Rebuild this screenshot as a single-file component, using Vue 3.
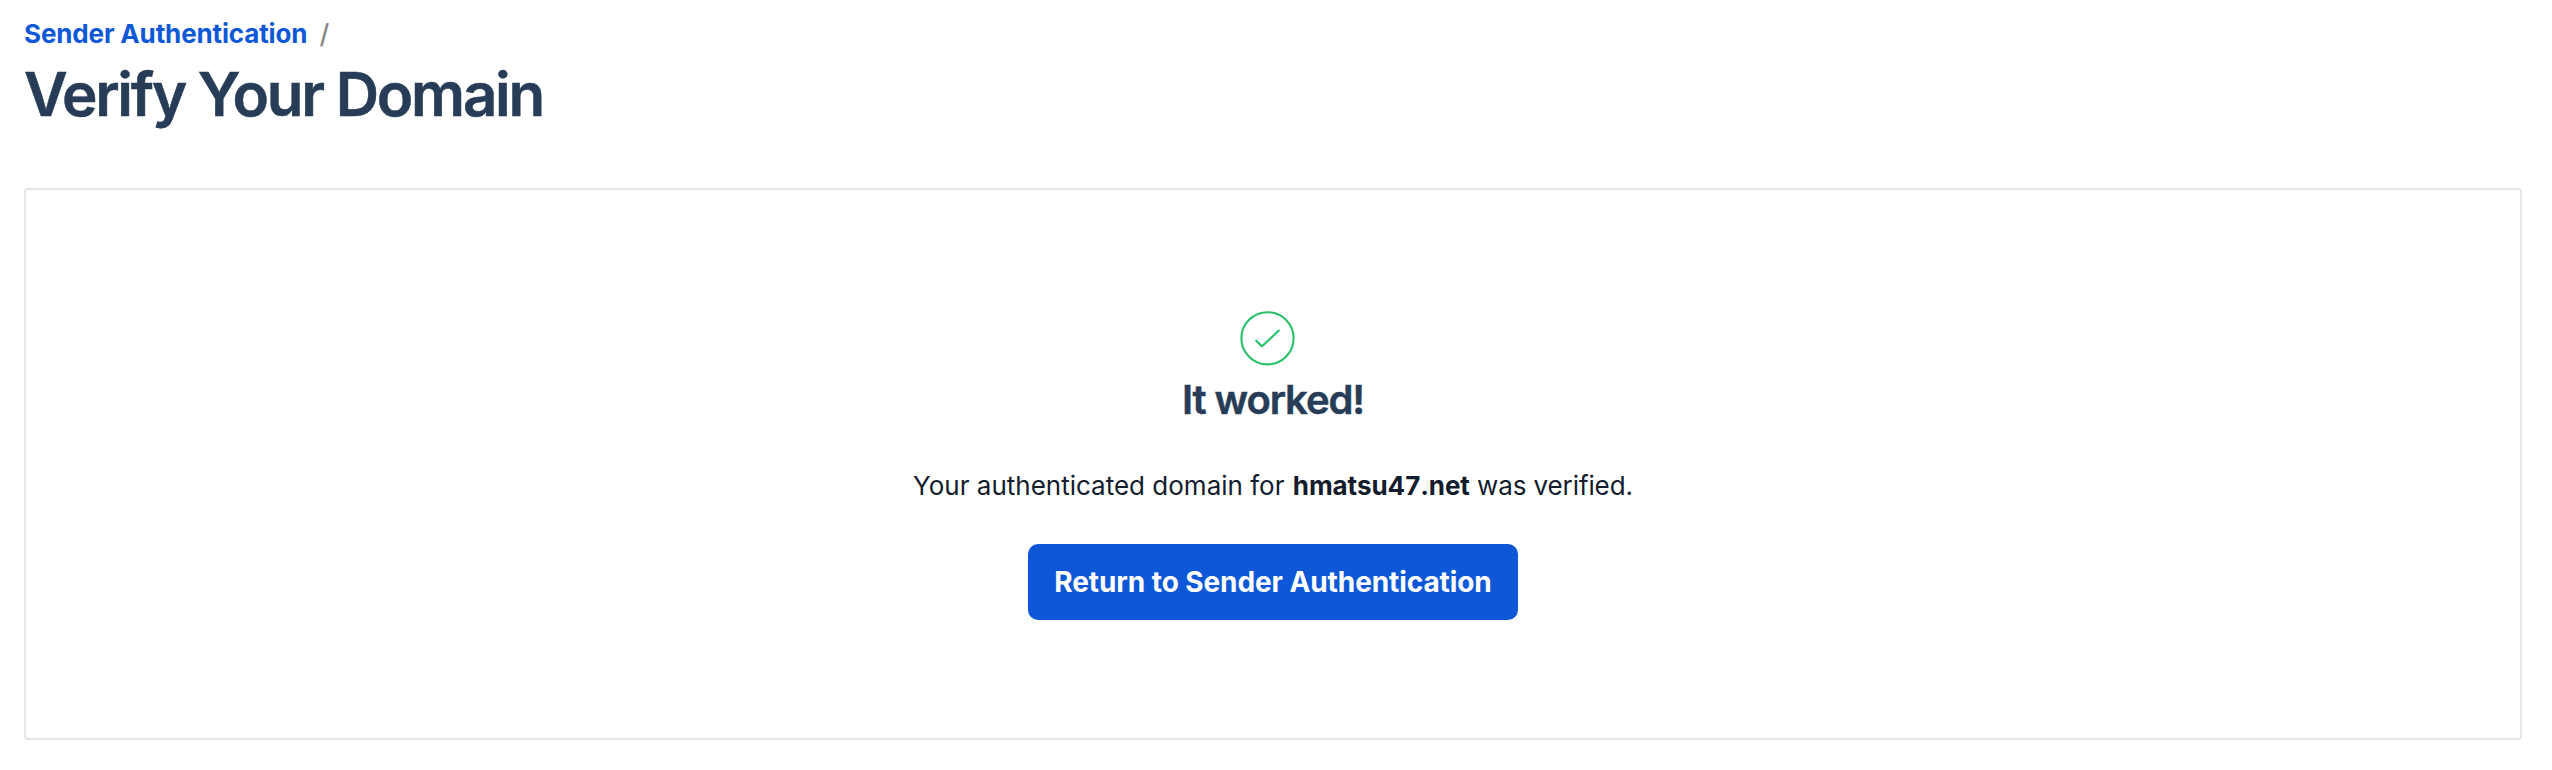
<template>
  <main class="page">
    <nav class="crumbs"><a>Sender Authentication</a><span>/</span></nav>
    <h1>Verify Your Domain</h1>
    <section class="card">
      <svg class="icon" width="56" height="56" viewBox="0 0 56 56" fill="none" stroke="#27c168" stroke-width="2.1" stroke-linecap="round" stroke-linejoin="round">
        <circle cx="27.5" cy="28.3" r="26.1" />
        <path d="M16.200 30.700L22 36.300L38.800 20.600" />
      </svg>
      <h2>It worked!</h2>
      <p>Your authenticated domain for <b>hmatsu47.net</b><span> was verified.</span></p>
      <button>Return to Sender Authentication</button>
    </section>
  </main>
</template>

<script setup>
</script>

<style>
body { margin: 0; background: #fff; }
</style>

<style scoped>
.page { box-sizing: border-box; height: 770px; padding: 16px 30px 0 24px; font-family: Inter, "Liberation Sans", sans-serif; }
.crumbs { height: 36px; line-height: 36px; font-size: 26px; color: #858585; white-space: nowrap; }
.crumbs a { color: #0e58d8; font-weight: 700; letter-spacing: -0.14px; margin-right: 12.5px; }
.crumbs span { -webkit-text-stroke: 0.3px currentColor; }
h1 { margin: 6px 0 0; height: 72px; line-height: 72px; font-size: 60px; font-weight: 600; letter-spacing: -2.24px; color: #273c56; white-space: nowrap; -webkit-text-stroke: 0.5px currentColor; }
.card { box-sizing: border-box; margin-top: 58px; height: 552px; border: 2px solid #e3e7eb; border-radius: 4px; padding-top: 120px; display: flex; flex-direction: column; align-items: center; }
.icon { display: block; margin-right: 10px; }
h2 { margin: 8px 0 0; line-height: 52px; font-size: 40px; font-weight: 600; letter-spacing: -1.08px; color: #273c56; -webkit-text-stroke: 0.5px currentColor; }
p { margin: 40px 0 0; line-height: 40px; height: 40px; font-size: 26px; color: #121c2d; white-space: nowrap; }
p b { font-weight: 700; font-kerning: none; letter-spacing: -0.07px; margin-left: 1px; }
p span { letter-spacing: -0.1px; }
button { margin: 38px 0 0; width: 490px; height: 76px; padding: 0; border: 0; border-radius: 10px; background: #0e58d8; color: #fff; font: 700 28px Inter, "Liberation Sans", sans-serif; letter-spacing: -0.09px; white-space: nowrap; }
</style>
